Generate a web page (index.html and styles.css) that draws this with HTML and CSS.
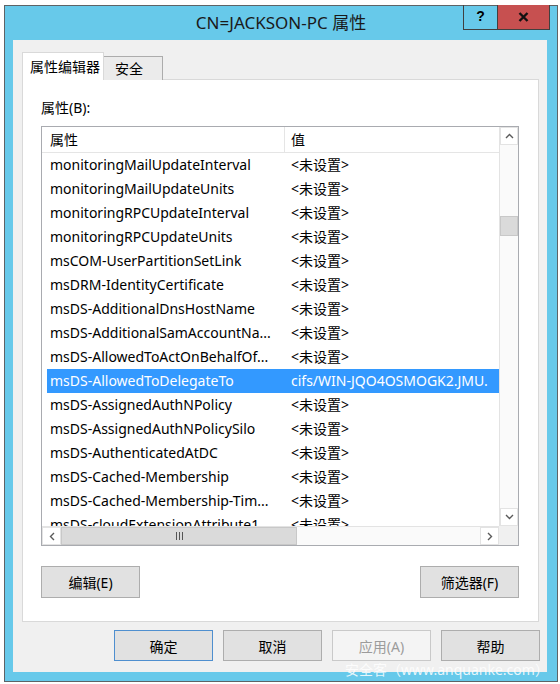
FILE: index.html
```html
<!DOCTYPE html>
<html lang="zh-CN">
<head>
    <meta charset="UTF-8">
    <title>CN=JACKSON-PC 属性</title>
    <link rel="stylesheet" href="styles.css">
</head>
<body>

<div class="window">
    <!-- Title bar -->
    <div class="titlebar">
        <span class="title">CN=JACKSON-PC 属性</span>
        <div class="caption-buttons">
            <span class="cap-help">?</span>
            <span class="cap-close">
                <svg width="11" height="10" viewBox="0 0 11 10"><path d="M1.5 1 L9.5 9 M9.5 1 L1.5 9" stroke="#111" stroke-width="2.4" fill="none"/></svg>
            </span>
        </div>
    </div>

    <div class="client">
        <!-- Tabs -->
        <div class="tabs">
            <div class="tab active">属性编辑器</div>
            <div class="tab">安全</div>
        </div>

        <div class="tab-page">
            <div class="field-label">属性(B):</div>

            <div class="listview">
                <div class="lv-body">
                    <div class="lv-header">
                        <div class="col-name">属性</div>
                        <div class="col-value">值</div>
                    </div>
                    <div class="lv-row"><span class="name">monitoringMailUpdateInterval</span><span class="value">&lt;未设置&gt;</span></div>
                    <div class="lv-row"><span class="name">monitoringMailUpdateUnits</span><span class="value">&lt;未设置&gt;</span></div>
                    <div class="lv-row"><span class="name">monitoringRPCUpdateInterval</span><span class="value">&lt;未设置&gt;</span></div>
                    <div class="lv-row"><span class="name">monitoringRPCUpdateUnits</span><span class="value">&lt;未设置&gt;</span></div>
                    <div class="lv-row"><span class="name">msCOM-UserPartitionSetLink</span><span class="value">&lt;未设置&gt;</span></div>
                    <div class="lv-row"><span class="name">msDRM-IdentityCertificate</span><span class="value">&lt;未设置&gt;</span></div>
                    <div class="lv-row"><span class="name">msDS-AdditionalDnsHostName</span><span class="value">&lt;未设置&gt;</span></div>
                    <div class="lv-row"><span class="name">msDS-AdditionalSamAccountNa...</span><span class="value">&lt;未设置&gt;</span></div>
                    <div class="lv-row"><span class="name">msDS-AllowedToActOnBehalfOf...</span><span class="value">&lt;未设置&gt;</span></div>
                    <div class="lv-row selected"><span class="name">msDS-AllowedToDelegateTo</span><span class="value">cifs/WIN-JQO4OSMOGK2.JMU.</span></div>
                    <div class="lv-row"><span class="name">msDS-AssignedAuthNPolicy</span><span class="value">&lt;未设置&gt;</span></div>
                    <div class="lv-row"><span class="name">msDS-AssignedAuthNPolicySilo</span><span class="value">&lt;未设置&gt;</span></div>
                    <div class="lv-row"><span class="name">msDS-AuthenticatedAtDC</span><span class="value">&lt;未设置&gt;</span></div>
                    <div class="lv-row"><span class="name">msDS-Cached-Membership</span><span class="value">&lt;未设置&gt;</span></div>
                    <div class="lv-row"><span class="name">msDS-Cached-Membership-Tim...</span><span class="value">&lt;未设置&gt;</span></div>
                    <div class="lv-row"><span class="name">msDS-cloudExtensionAttribute1</span><span class="value">&lt;未设置&gt;</span></div>
                </div>

                <!-- vertical scrollbar -->
                <div class="vscroll">
                    <div class="sb-btn">
                        <svg width="9" height="6" viewBox="0 0 9 6"><path d="M1 5 L4.5 1.5 L8 5" fill="none" stroke="#5a5a5a" stroke-width="1.4"/></svg>
                    </div>
                    <div class="vtrack"><div class="vthumb"></div></div>
                    <div class="sb-btn">
                        <svg width="9" height="6" viewBox="0 0 9 6"><path d="M1 1 L4.5 4.5 L8 1" fill="none" stroke="#5a5a5a" stroke-width="1.4"/></svg>
                    </div>
                </div>

                <!-- horizontal scrollbar -->
                <div class="hscroll">
                    <div class="sb-btn">
                        <svg width="6" height="9" viewBox="0 0 6 9"><path d="M5 1 L1.5 4.5 L5 8" fill="none" stroke="#5a5a5a" stroke-width="1.4"/></svg>
                    </div>
                    <div class="htrack">
                        <div class="hthumb">
                            <svg width="7" height="8" viewBox="0 0 7 8"><path d="M0.5 0 V8 M3.5 0 V8 M6.5 0 V8" stroke="#555" stroke-width="1"/></svg>
                        </div>
                    </div>
                    <div class="sb-btn">
                        <svg width="6" height="9" viewBox="0 0 6 9"><path d="M1 1 L4.5 4.5 L1 8" fill="none" stroke="#5a5a5a" stroke-width="1.4"/></svg>
                    </div>
                </div>
                <div class="corner"></div>
            </div>

            <div class="page-buttons">
                <button class="btn">编辑(E)</button>
                <button class="btn">筛选器(F)</button>
            </div>
        </div>

        <!-- Dialog buttons -->
        <div class="dialog-buttons">
            <button class="btn default">确定</button>
            <button class="btn">取消</button>
            <button class="btn" disabled>应用(A)</button>
            <button class="btn">帮助</button>
        </div>
    </div>

    <div class="watermark">安全客（www.anquanke.com）</div>
</div>

</body>
</html>
```

FILE: styles.css
```css
body {
    margin: 0;
    background: #fff;
    font-family: "Noto Sans", "Noto Sans CJK SC", sans-serif;
    font-size: 14px;
    color: #000;
}
.window {
    position: relative;
    margin: 5px 0 0 4px;
    width: 554px;
    box-sizing: border-box;
    border: 1px solid #5e6366;
    background: #67c9ea;
    padding-bottom: 9px;
}
.titlebar {
    height: 34px;
    display: grid;
    grid-template-columns: 1fr auto 1fr;
    align-items: start;
    padding: 0 7px;
}
.title {
    grid-column: 2;
    font-size: 17px;
    line-height: 34px;
    color: #1a1a1a;
}
.caption-buttons {
    grid-column: 3;
    justify-self: end;
    display: flex;
    margin-top: -1px;
    height: 25px;
    box-sizing: border-box;
    border: 1px solid #404040;
    border-top: none;
}
.cap-help {
    width: 33px;
    border-right: 1px solid #404040;
    text-align: center;
    font-family: "Liberation Sans", sans-serif;
    font-weight: bold;
    font-size: 14px;
    line-height: 22px;
}
.cap-close {
    width: 51px;
    background: #c75050;
    display: flex;
    align-items: center;
    justify-content: center;
}
.client {
    margin: 0 10px 0 8px;
    height: 632px;
    box-sizing: border-box;
    background: #f0f0f0;
    padding-top: 12px;
}
.tabs {
    display: flex;
    align-items: flex-end;
    margin-left: 9px;
    height: 28px;
}
.tab {
    box-sizing: border-box;
    height: 24px;
    width: 60px;
    margin-left: -1px;
    padding-left: 11px;
    line-height: 23px;
    border: 1px solid #acacac;
    border-bottom: none;
    background: #ebebeb;
}
.tab.active {
    position: relative;
    z-index: 1;
    height: 28px;
    width: 82px;
    margin-left: 0;
    padding-left: 7px;
    line-height: 27px;
    border-color: #d9d9d9;
    background: #fff;
}
.tab-page {
    margin: -1px 8px 0 9px;
    border: 1px solid #d9d9d9;
    background: #fff;
    padding: 18px 19px 23px 18px;
}
.field-label {
    line-height: 20px;
    margin-bottom: 8px;
}
.listview {
    width: 478px;
    height: 420px;
    box-sizing: border-box;
    border: 1px solid #a9abb0;
    display: grid;
    grid-template-columns: 1fr 19px;
    grid-template-rows: 1fr 19px;
}
.lv-body {
    overflow: hidden;
}
.lv-header {
    display: flex;
    height: 26px;
    box-sizing: border-box;
    border-bottom: 1px solid #e5e5e5;
    line-height: 25px;
}
.col-name {
    width: 243px;
    box-sizing: border-box;
    padding-left: 8px;
    border-right: 1px solid #e5e5e5;
}
.col-value {
    padding-left: 6px;
}
.lv-row {
    display: flex;
    height: 24px;
    line-height: 23px;
    margin-left: 5px;
    white-space: nowrap;
}
.lv-row .name {
    width: 238px;
    flex: none;
    box-sizing: border-box;
    padding-left: 3px;
    overflow: hidden;
}
.lv-row .value {
    flex: 1;
    padding-left: 6px;
    overflow: hidden;
}
.lv-row.selected {
    background: #3399ff;
    color: #fff;
}
.vscroll {
    display: flex;
    flex-direction: column;
    border-left: 1px solid #e3e3e3;
    background: #fafafa;
}
.hscroll {
    display: flex;
    border-top: 1px solid #e3e3e3;
    background: #fafafa;
}
.sb-btn {
    flex: none;
    width: 18px;
    height: 18px;
    display: flex;
    align-items: center;
    justify-content: center;
    background: #fff;
    border: 1px solid #e3e3e3;
    box-sizing: border-box;
}
.vscroll .sb-btn {
    width: 100%;
}
.hscroll .sb-btn {
    height: 100%;
    width: 19px;
}
.vtrack {
    flex: 1;
}
.vthumb {
    margin-top: 71px;
    height: 18px;
    background: #dadada;
    border: 1px solid #c8c8c8;
}
.htrack {
    flex: 1;
    display: flex;
}
.hthumb {
    width: 236px;
    box-sizing: border-box;
    background: #dadada;
    border: 1px solid #c8c8c8;
    display: flex;
    align-items: center;
    justify-content: center;
}
.corner {
    background: #f0f0f0;
}
.page-buttons {
    display: flex;
    justify-content: space-between;
    width: 478px;
    margin-top: 20px;
}
.btn {
    width: 99px;
    height: 32px;
    border: 1px solid #adadad;
    background: #e1e1e1;
    font-family: "Noto Sans", "Noto Sans CJK SC", sans-serif;
    font-size: 14px;
    color: #000;
    padding: 0;
}
.dialog-buttons {
    display: flex;
    justify-content: flex-end;
    gap: 10px;
    margin: 8px 7px 0 0;
}
.dialog-buttons .btn {
    height: 31px;
}
.btn.default {
    border-color: #4f8fcf;
}
.btn:disabled {
    background: #f4f4f4;
    border-color: #c9c9c9;
    color: #9c9c9c;
}
.watermark {
    position: absolute;
    left: 340px;
    top: 653px;
    font-size: 14px;
    color: rgba(255, 255, 255, 0.85);
    white-space: nowrap;
}
```
